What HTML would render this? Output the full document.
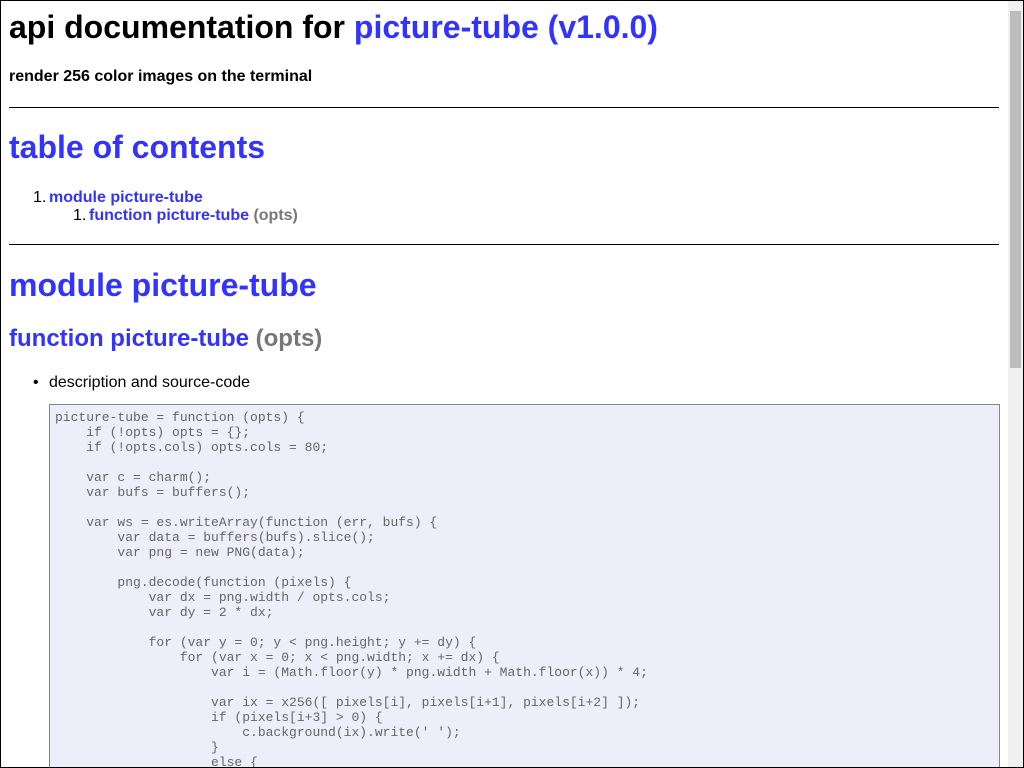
<!DOCTYPE html>
<html><head><meta charset="utf-8"><style>
html,body{margin:0;padding:0;width:1024px;height:768px;overflow:hidden;background:#fff;font-family:"Liberation Sans",sans-serif;}
.wrap{position:relative;width:1024px;height:768px;overflow:hidden}
.frame{position:absolute;left:0;top:0;width:1022px;height:766px;border:1px solid #000;z-index:10;pointer-events:none}
.a{position:absolute;white-space:nowrap;line-height:1.15;margin:0}
.blue{color:#3333ff}
.gray{color:#777}
hr{position:absolute;left:9px;width:990px;margin:0;border:0;border-top:1px solid #000;height:0}
pre{position:absolute;left:49px;top:404px;width:939px;height:352px;overflow:hidden;margin:0;padding:5px;border:1px solid #888;background:#eeeefb;color:#666;font-family:"Liberation Mono",monospace;font-size:13px;line-height:15px}
.sb{position:absolute;left:1008px;top:1px;width:15px;height:766px;background:#f0f0f0}
.th{position:absolute;left:1010px;top:11px;width:11px;height:357px;background:#bcbcbc}
</style></head><body><div class="wrap">
<div class="a" style="left:9px;top:9px;font-size:32px;font-weight:bold">api documentation for <span class="blue">picture-tube (v1.0.0)</span></div>
<div class="a" style="left:9px;top:68px;font-size:16px;font-weight:bold">render 256 color images on the terminal</div>
<hr style="top:107px">
<div class="a blue" style="left:9px;top:129px;font-size:32px;font-weight:bold">table of contents</div>
<div class="a" style="left:33px;top:189px;font-size:16px">1.</div>
<div class="a" style="left:49px;top:189px;font-size:16px"><b class="blue">module picture-tube</b></div>
<div class="a" style="left:73px;top:207px;font-size:16px">1.</div>
<div class="a" style="left:89px;top:207px;font-size:16px"><b class="blue">function picture-tube</b> <b class="gray">(opts)</b></div>
<hr style="top:244px">
<div class="a blue" style="left:9px;top:267px;font-size:32px;font-weight:bold">module picture-tube</div>
<div class="a" style="left:9px;top:325px;font-size:24px;font-weight:bold"><span class="blue">function picture-tube</span> <span class="gray">(opts)</span></div>
<div class="a" style="left:33px;top:374px;font-size:16px">•</div>
<div class="a" style="left:49px;top:374px;font-size:16px">description and source-code</div>
<pre>picture-tube = function (opts) {
    if (!opts) opts = {};
    if (!opts.cols) opts.cols = 80;

    var c = charm();
    var bufs = buffers();

    var ws = es.writeArray(function (err, bufs) {
        var data = buffers(bufs).slice();
        var png = new PNG(data);

        png.decode(function (pixels) {
            var dx = png.width / opts.cols;
            var dy = 2 * dx;

            for (var y = 0; y &lt; png.height; y += dy) {
                for (var x = 0; x &lt; png.width; x += dx) {
                    var i = (Math.floor(y) * png.width + Math.floor(x)) * 4;

                    var ix = x256([ pixels[i], pixels[i+1], pixels[i+2] ]);
                    if (pixels[i+3] &gt; 0) {
                        c.background(ix).write(' ');
                    }
                    else {
                        c.display('reset').write(' ');
                    }
</pre>
<div class="sb"></div><div class="th"></div>
<div class="frame"></div>
</div></body></html>
